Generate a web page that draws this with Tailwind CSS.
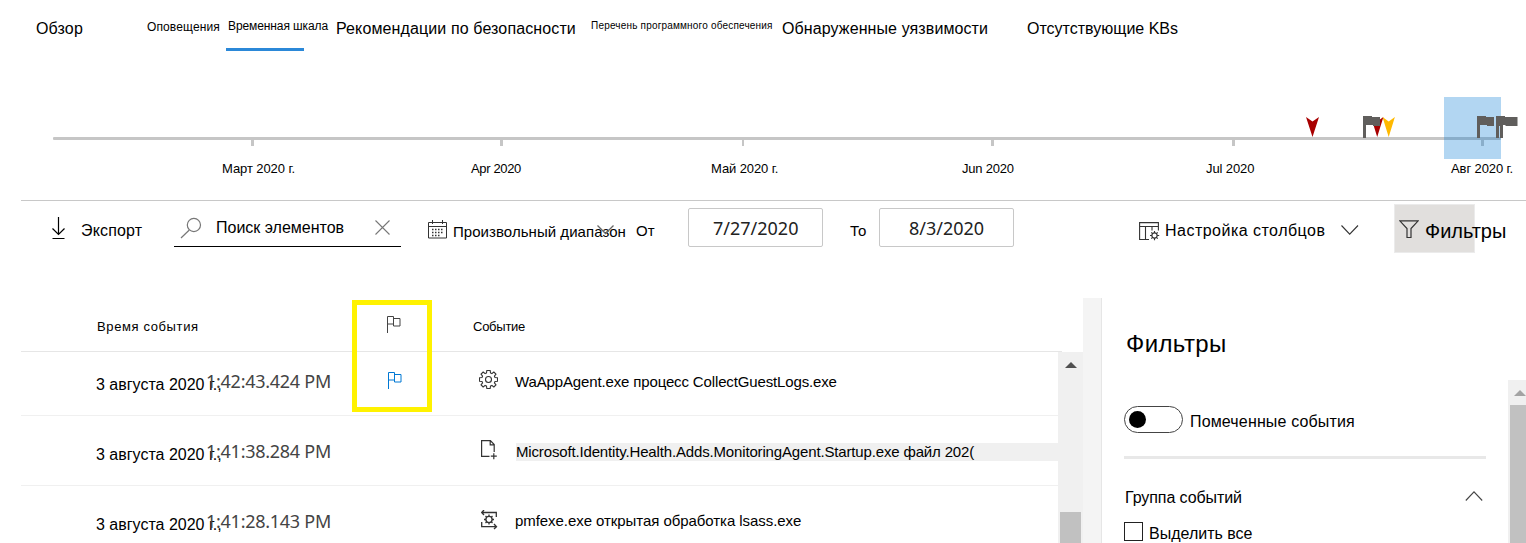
<!DOCTYPE html>
<html lang="ru">
<head>
<meta charset="utf-8">
<title>Временная шкала</title>
<script src="https://cdn.jsdelivr.net/npm/@tailwindcss/browser@4"></script>
</head>
<body class="w-[1526px] h-[543px] overflow-hidden bg-white text-black whitespace-nowrap font-['Liberation_Sans',Arial,sans-serif]">

<!-- Tabs -->
<nav class="h-[96px] pl-9 pt-[19px] grid grid-cols-[111px_79px_110px_255px_191px_245px_1fr] items-start text-base leading-5">
  <a class="tracking-[0.15px]">Обзор</a>
  <a class="-mt-0.5 text-xs leading-5 tracking-[0.12px]">Оповещения</a>
  <a class="-mt-[3px] h-[35px] w-[78px] text-xs leading-5 tracking-[-0.1px] border-b-3 border-[#2b88d8] pl-0.5">Временная шкала</a>
  <a class="tracking-[0.12px]">Рекомендации по безопасности</a>
  <a class="-mt-[3px] text-[10px] leading-5 tracking-[0.19px]">Перечень программного обеспечения</a>
  <a class="tracking-[0.1px]">Обнаруженные уязвимости</a>
  <a>Отсутствующие KBs</a>
</nav>

<!-- Timeline -->
<section class="relative h-[104px]">
  <svg class="absolute inset-0" width="1526" height="104" viewBox="0 96 1526 104">
    <g fill="#c6c6c6">
      <rect x="53" y="137" width="1448" height="3" rx="1"/>
      <rect x="251" y="140" width="3" height="6"/><rect x="500" y="140" width="3" height="6"/><rect x="742" y="140" width="2" height="6"/><rect x="991" y="140" width="3" height="6"/><rect x="1232" y="140" width="3" height="6"/><rect x="1481" y="140" width="3" height="6"/>
    </g>
    <rect x="1444" y="97" width="57" height="62" fill="#0078d4" fill-opacity=".3"/>
    <path fill="#a80000" d="M1306 117l6.500 4.500 6.500-4.500-6.500 20zM1371 117l6.200 4.500 6.200-4.500-6.200 20z"/>
    <path fill="#ffb900" d="M1382.500 117l6.200 4.500 6.200-4.500-6.200 20z"/>
    <g fill="#605e5c">
      <path d="M1363 116h9v1h8v9h-7v-1h-7v13h-3z"/>
      <path d="M1477 116h9v1h8v9h-7v-1h-7v13h-3zM1496 116h9v1h12.500v9h-12v-1h-2.500v13h-3v-12h-1v12h-3z"/>
    </g>
  </svg>
  <div class="pt-[63px] pl-[222px] grid grid-cols-[249px_240px_251px_244px_245px_1fr] text-[13px] leading-5">
    <span class="tracking-[-0.08px]">Март 2020 г.</span>
    <span class="tracking-[-0.35px]">Apr 2020</span>
    <span class="tracking-[-0.1px]">Май 2020 г.</span>
    <span class="tracking-[-0.2px]">Jun 2020</span>
    <span class="tracking-[-0.1px]">Jul 2020</span>
    <span class="tracking-[-0.1px]">Авг 2020 г.</span>
  </div>
</section>

<!-- Command bar -->
<section class="ml-[21px] h-[98px] border-t border-[#c8c8c8] flex items-start text-base leading-5">
  <div class="flex w-[153px] pl-[30px]">
    <svg class="mt-4" width="15" height="23" fill="none" stroke="#000"><path d="M7.500 0v17M1.500 11.500l6 6 6-6M1.500 21.500h12" stroke-width="1.200"/></svg>
    <span class="ml-[15px] mt-[20px] tracking-[0.15px]">Экспорт</span>
  </div>
  <div class="flex w-[227px] h-[46px] border-b border-black">
    <svg class="ml-[6px] mt-4" width="22" height="22" fill="none" stroke="#777" stroke-width="1.200"><circle cx="13.900" cy="8" r="6.600"/><path d="M9.300 13L1 21"/></svg>
    <span class="ml-[14px] mt-[17px] w-[159px]">Поиск элементов</span>
    <svg class="mt-[19px]" width="16" height="16" stroke="#777" stroke-width="1.100"><path d="M.5 .5l14 14M14.500 .5l-14 14"/></svg>
  </div>
  <div class="flex ml-[27px] w-[208px] relative">
    <svg class="mt-[19px]" width="20" height="20" fill="none" stroke="#333"><path d="M.5 2.500h18v15.500h-18zM.5 6.500h18M4.500 0v4M14.500 0v4"/><path d="M4 9.500h12M4 12.500h12M4 15.500h9" stroke-dasharray="1.500 1.500" stroke-width="1.300"/></svg>
    <span class="ml-[5px] mt-[21px] text-[15px] leading-5 tracking-[0.05px]">Произвольный диапазон</span>
    <svg class="absolute left-[169px] top-[24px]" width="18" height="10" fill="none" stroke="#666" stroke-width="1.300"><path d="M.5 .5l8 8 8-8"/></svg>
  </div>
  <span class="mt-[20px] w-[52px] text-[15px] leading-5">От</span>
  <div class="mt-[7px] w-[135px] h-[39px] border border-[#c8c8c8] rounded-xs pl-6 pt-[7px] text-lg leading-6 text-[#222] font-['Noto_Sans',sans-serif]">7/27/2020</div>
  <span class="mt-[20px] ml-[27px] w-[29px] text-[15px] leading-5">То</span>
  <div class="mt-[7px] w-[135px] h-[39px] border border-[#c8c8c8] rounded-xs pl-[29px] pt-[7px] text-lg leading-6 text-[#222] font-['Noto_Sans',sans-serif]">8/3/2020</div>
  <div class="flex ml-[125px] w-[255px]">
    <svg class="mt-[21px]" width="21" height="19" fill="none" stroke="#333" stroke-width="1.100"><path d="M10 17.500H.6V.6h18.800v8M.6 4.500h18.800M6.500 4.500v13M13 4.500v4"/><circle cx="15.500" cy="13.500" r="2.600"/><path d="M15.500 9v2M15.500 16v2.200M11 13.500h2M18 13.500h2.200M12.300 10.300l1.500 1.500M17.200 15.200l1.500 1.500M18.700 10.300l-1.500 1.500M13.800 15.200l-1.500 1.500"/></svg>
    <span class="ml-[5px] mt-[20px] tracking-[0.48px] w-[176px]">Настройка столбцов</span>
    <svg class="mt-[24px]" width="18" height="11" fill="none" stroke="#333" stroke-width="1.100"><path d="M.5 .5l8.200 8.700L17 .5"/></svg>
  </div>
  <div class="flex mt-[3px] w-[81px] h-[49px] bg-[#e1dfdd] border border-[#ebebeb] pl-1">
    <svg class="mt-[15px] shrink-0" width="20" height="19" fill="none" stroke="#333" stroke-width="1.200"><path d="M.8 .8h18.400l-7.200 7.700v9h-4v-9z"/></svg>
    <span class="ml-[6px] mt-[14px] text-[20px] leading-6 tracking-[-0.05px]">Фильтры</span>
  </div>
</section>

<main class="ml-[21px] h-[245px] flex">
  <!-- Event list -->
  <section class="w-[1062px] h-full relative">
    <div class="h-[54px] w-[1041px] border-b border-[#e6e6e6] flex items-start text-[13px] leading-5">
      <span class="ml-[76px] mt-[19px] w-[290px] tracking-[0.62px]">Время события</span>
      <svg class="mt-[18px]" width="14" height="17" fill="none" stroke="#444"><path d="M.5 17V.5h6v7.500h-6M6.500 2.500h6.500v7.500h-6.500v-2"/></svg>
      <span class="ml-[72px] mt-[19px] tracking-[-0.25px]">Событие</span>
    </div>
    <div class="flex">
      <div class="w-[1037px]">
        <div class="h-[64px] border-b border-[#f0f0f0] flex items-start">
          <span class="ml-[75px] mt-[23px] w-[110px] text-base leading-5">3 августа 2020 г.,</span>
          <span class="mt-[17px] w-[182px] text-lg leading-6 tracking-[-0.27px] text-[#444] font-['Noto_Sans',sans-serif]">1:42:43.424 PM</span>
          <svg class="mt-[20px]" width="14" height="17" fill="none" stroke="#0078d4"><path d="M.5 17V.5h6v7.500h-6M6.500 2.500h6.500v7.500h-6.500v-2"/></svg>
          <svg class="ml-[77px] mt-[18px]" width="19" height="19" viewBox="-9.500 -9.500 19 19" fill="none" stroke="#333" stroke-width="1.100"><circle r="3"/><path stroke-linejoin="round" d="M-1.700 -9H1.700L2 -6.500L3.400 -5.900L5.300 -7.500L7.500 -5.300L5.900 -3.400L6.500 -2L9 -1.700V1.700L6.500 2L5.900 3.400L7.500 5.300L5.300 7.500L3.400 5.900L2 6.500L1.700 9H-1.700L-2 6.500L-3.400 5.900L-5.300 7.500L-7.500 5.300L-5.900 3.400L-6.500 2L-9 1.700V-1.700L-6.500 -2L-5.900 -3.400L-7.500 -5.300L-5.300 -7.500L-3.400 -5.900L-2 -6.500Z"/></svg>
          <span class="ml-[17px] mt-[20px] text-[15px] leading-5 tracking-[-0.14px]">WaAppAgent.exe процесс CollectGuestLogs.exe</span>
        </div>
        <div class="h-[70px] border-b border-[#f0f0f0] flex items-start">
          <span class="ml-[75px] mt-[29px] w-[110px] text-base leading-5">3 августа 2020 г.,</span>
          <span class="mt-[23px] w-[275px] text-lg leading-6 tracking-[-0.27px] text-[#444] font-['Noto_Sans',sans-serif]">1:41:38.284 PM</span>
          <svg class="mt-[24px]" width="17" height="20" fill="none" stroke="#333" stroke-width="1.200"><path d="M8.500 16.400H.6V.6h8.800l3.800 4v7.500M9.200 .6v4.200h4M12.800 13.200v6M9.800 16.200h6"/></svg>
          <div class="ml-[18px] mt-[27px] h-[18px] flex-1 bg-[#f0f0f0] text-[15px] leading-[18px] tracking-[-0.155px]">Microsoft.Identity.Health.Adds.MonitoringAgent.Startup.exe файл 202(</div>
        </div>
        <div class="h-[57px] flex items-start">
          <span class="ml-[75px] mt-[29px] w-[110px] text-base leading-5">3 августа 2020 г.,</span>
          <span class="mt-[23px] w-[275px] text-lg leading-6 tracking-[-0.27px] text-[#444] font-['Noto_Sans',sans-serif]">1:41:28.143 PM</span>
          <svg class="mt-[24px]" width="17" height="20" fill="none" stroke="#333" stroke-width="1.300"><path d="M15.300 7V2.500H.5M3 0L.7 2.500 3 5M.7 12v4.700h15M13 14l2.500 2.700L13 19"/><circle cx="8" cy="9.500" r="3.100"/><path d="M8 4.600v2M8 12.500v2M3 9.500h2M11 9.500h2M4.500 6l1.400 1.400M10.100 11.600l1.400 1.400M11.500 6l-1.400 1.400M5.900 11.600l-1.400 1.400"/></svg>
          <span class="ml-[17px] mt-[25px] text-[15px] leading-5 tracking-[-0.06px]">pmfexe.exe открытая обработка lsass.exe</span>
        </div>
      </div>
      <!-- List scrollbar -->
      <div class="w-[25px] h-[191px] bg-[#f0f0f0] flex flex-col items-center">
        <svg class="mt-[10px]" width="12" height="6"><path d="M0 6l6-6 6 6z" fill="#505050"/></svg>
        <div class="mt-[144px] w-[21px] flex-1 bg-[#c1c1c1]"></div>
      </div>
    </div>
    <!-- Flag column highlight -->
    <div class="absolute left-[331px] top-[2px] w-[80px] h-[112px] border-5 border-[#fff200]"></div>
  </section>

  <div class="w-[19px] h-full bg-[#f4f4f4] border-r border-[#e6e6e6]"></div>

  <!-- Filter panel -->
  <aside class="flex-1 h-full flex">
    <div class="ml-[22px] w-[362px] text-base leading-5">
      <h2 class="ml-0.5 mt-[31px] text-2xl leading-[30px] tracking-[0.4px]">Фильтры</h2>
      <div class="mt-[47px] flex">
        <div class="w-[59px] h-[27px] rounded-full border border-[#444] flex items-center pl-1"><i class="size-[17px] rounded-full bg-black"></i></div>
        <span class="ml-[7px] mt-[6px] tracking-[0.15px]">Помеченные события</span>
      </div>
      <div class="mt-[23px] h-[3px] bg-[#e8e8e8]"></div>
      <div class="mt-[29px] flex justify-between">
        <span class="ml-px tracking-[-0.08px]">Группа событий</span>
        <svg class="mt-[3px] mr-[3px]" width="18" height="11" fill="none" stroke="#444" stroke-width="1.100"><path d="M.8 9.500L9 .8l8.200 8.700"/></svg>
      </div>
      <div class="mt-[14px] flex">
        <div class="w-[19px] h-[19px] border border-[#222]"></div>
        <span class="ml-[6px] mt-[2px]">Выделить все</span>
      </div>
    </div>
    <!-- Panel scrollbar -->
    <div class="ml-[22px] mt-[82px] w-[18px] bg-[#f0f0f0] flex flex-col pl-0.5 overflow-hidden">
      <svg class="ml-[4px] mt-[10px] shrink-0" width="12" height="6"><path d="M0 6l6-6 6 6z" fill="#a3a3a3"/></svg>
      <div class="mt-[9px] flex-1 bg-[#c1c1c1]"></div>
    </div>
  </aside>
</main>
</body>
</html>
